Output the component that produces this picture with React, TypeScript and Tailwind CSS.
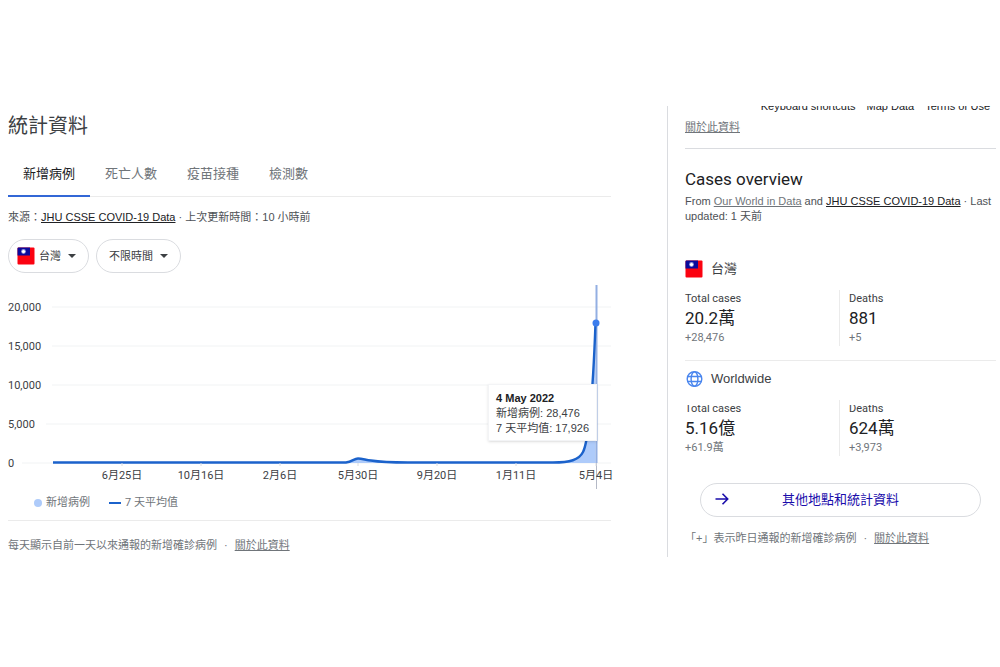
import clsx from "clsx";

const tabs = ["新增病例", "死亡人數", "疫苗接種", "檢測數"];

const yTicks = [
  { label: "20,000", y: 22 },
  { label: "15,000", y: 61 },
  { label: "10,000", y: 100 },
  { label: "5,000", y: 139 },
  { label: "0", y: 178 },
];

const xTicks = [
  { label: "6月25日", x: 114 },
  { label: "10月16日", x: 193 },
  { label: "2月6日", x: 272 },
  { label: "5月30日", x: 350 },
  { label: "9月20日", x: 429 },
  { label: "1月11日", x: 508 },
  { label: "5月4日", x: 588 },
];

const LINE =
  "M45 177.5 H338 C344 177 346 173.5 350 173.5 C354 173.5 358 175 363 175.5 C372 177 385 177.5 400 177.5 H545 C562 177.5 571 175 575 167 C579 159 580 146 582 128 C585 100 586 80 587.5 38";

function Flag() {
  return (
    <svg viewBox="0 0 18 18" className="size-[18px] shrink-0" aria-hidden="true">
      <rect x="0.5" y="0.5" width="17" height="17" rx="1" fill="#fb0210" />
      <path d="M1.5 0.5H13V8.5H0.5V1.5a1 1 0 0 1 1-1z" fill="#0a0a9c" />
      <circle cx="6.5" cy="4.5" r="2.4" fill="#8f96dc" />
      <circle cx="6.5" cy="4.5" r="1.6" fill="#fff" />
    </svg>
  );
}

function Globe() {
  return (
    <svg viewBox="0 0 18 18" className="size-[18px] shrink-0" fill="none" stroke="#4a86ee" strokeWidth="1.4" aria-hidden="true">
      <circle cx="9.5" cy="9" r="7.3" />
      <ellipse cx="9.5" cy="9" rx="3.4" ry="7.3" />
      <path d="M2.8 6.5h13.4M2.8 11.5h13.4" />
    </svg>
  );
}

function Caret() {
  return (
    <svg viewBox="0 0 8 4" className="h-1 w-2 shrink-0" fill="#3c4043" aria-hidden="true">
      <path d="M0 0h8L4 4z" />
    </svg>
  );
}

function Chart() {
  return (
    <div className="relative mt-3">
      <svg viewBox="0 0 603 204" className="block w-full overflow-visible">
        {yTicks.map((t) => (
          <g key={t.label}>
            <path d={`M${t.label.length * 6 + 8} ${t.y}H603`} stroke="#f1f3f4" />
            <text x="0" y={t.y + 4} className="fill-[#3c4043] text-[11px]">
              {t.label}
            </text>
          </g>
        ))}
        <path d={`${LINE} V178 H45 Z`} fill="#aecbfa" />
        <path d="M588.5 0V178" stroke="#93afe2" strokeWidth="2" />
        <path d="M588.5 178V204" stroke="#b4b9c6" />
        <path d={LINE} fill="none" stroke="#1b62cb" strokeWidth="2.4" />
        {xTicks.map((t) => (
          <g key={t.label}>
            <path d={`M${t.x} 178v3`} stroke="#dadce0" />
            <text x={t.x} y="194" textAnchor="middle" className="fill-[#3c4043] text-[11px]">
              {t.label}
            </text>
          </g>
        ))}
        <circle cx="588" cy="38" r="3.5" fill="#3b7ded" />
      </svg>
      <div className="absolute top-[99px] right-3.5 border border-gray-100 bg-white px-[7px] pt-1.5 pb-1 font-[Liberation_Sans,Noto_Sans_CJK_TC,sans-serif] text-[11px] leading-[15px] whitespace-nowrap text-[#3c4043] shadow">
        <p className="font-bold text-[#202124]">4 May 2022</p>
        <p>新增病例: 28,476</p>
        <p>7 天平均值: 17,926</p>
      </div>
    </div>
  );
}

function Stat({ label, value, delta, clipped }: { label: string; value: string; delta: string; clipped?: boolean }) {
  return (
    <div className="border-[#ebebeb] font-[Roboto,Noto_Sans_CJK_TC,sans-serif] not-first:border-l not-first:pl-[9px]">
      <dt className={clsx("text-[11px] leading-[17px] text-[#3c4043]", clipped && "[clip-path:inset(5px_0_0_0)]")}>{label}</dt>
      <dd className="text-[17px] leading-[23px] text-[#202124]">{value}</dd>
      <dd className="text-[11px] leading-4 text-[#70757a]">{delta}</dd>
    </div>
  );
}

export default function App() {
  return (
    <div className="grid min-h-screen grid-cols-[667fr_333fr] items-start bg-white pt-[106px] font-[Liberation_Sans,Noto_Sans_CJK_TC,sans-serif] text-[11px] text-[#4d5156]">
      <main className="pr-14 pl-2">
        <h1 className="text-xl leading-10 text-[#3c4043]">統計資料</h1>
        <nav className="mt-1.5 flex border-b border-[#ebebeb]">
          {tabs.map((tab, i) => (
            <button
              key={tab}
              className={clsx(
                "-mb-px h-[45px] border-b-2 px-[15px] pt-px text-[13px]",
                i === 0 ? "border-[#3367d6] text-[#202124]" : "border-transparent text-[#70757a]"
              )}
            >
              {tab}
            </button>
          ))}
        </nav>
        <p className="mt-2.5 leading-5">
          來源：<a href="#jhu" className="text-[#202124] underline">JHU CSSE COVID-19 Data</a> · 上次更新時間：10 小時前
        </p>
        <div className="mt-3 flex gap-[7px]">
          <button className="flex h-[34px] items-center gap-1 rounded-full border border-[#dadce0] pr-3 pl-2 text-[#3c4043]">
            <Flag />
            <span className="mr-[3px]">台灣</span>
            <Caret />
          </button>
          <button className="flex h-[34px] items-center gap-[7px] rounded-full border border-[#dadce0] px-3 text-[#3c4043]">
            不限時間
            <Caret />
          </button>
        </div>

        <div className="font-[Roboto,Noto_Sans_CJK_TC,sans-serif]">
          <Chart />
          <div className="mt-1.5 flex items-center pl-[26px] leading-4 text-[#70757a]">
            <span className="mr-1 size-2 rounded-full bg-[#aecbfa]" />
            新增病例
            <span className="mr-1 ml-[19px] h-0.5 w-3 bg-[#1b62cb]" />7 天平均值
          </div>
        </div>

        <p className="mt-[9px] border-t border-[#ebebeb] py-4 leading-4 text-[#70757a]">
          每天顯示自前一天以來通報的新增確診病例<span className="mx-[7px]">·</span>
          <a href="#about" className="underline">關於此資料</a>
        </p>
      </main>

      <aside className="border-l border-[#dadce0] pr-1 pb-[11px] pl-[17px]">
        {/* tail of the map's attribution row, cut off by the scroll edge */}
        <div className="flex h-2 items-end justify-end gap-[11px] overflow-hidden pr-1.5 leading-4 whitespace-nowrap text-[#202124]">
          <span>Keyboard shortcuts</span>
          <span>Map Data</span>
          <span>Terms of Use</span>
        </div>
        <p className="mt-[5px] leading-4 text-[#70757a]">
          <a href="#about" className="underline">關於此資料</a>
        </p>

        <h2 className="mt-[13px] border-t border-[#dadce0] pt-[18px] font-[Roboto,Noto_Sans_CJK_TC,sans-serif] text-[17px] leading-6 text-[#202124]">
          Cases overview
        </h2>
        <p className="mt-[3px] leading-[15px]">
          From <a href="#owid" className="text-[#70757a] underline">Our World in Data</a> and{" "}
          <a href="#jhu" className="text-[#202124] underline">JHU CSSE COVID-19 Data</a> · Last updated: 1 天前
        </p>

        <section className="mt-[35px] border-b border-[#ebebeb] pb-3.5">
          <h3 className="flex h-5 items-center gap-2 text-[13px] text-[#3c4043]">
            <Flag />
            台灣
          </h3>
          <dl className="mt-[11px] grid grid-cols-[154fr_157fr]">
            <Stat label="Total cases" value="20.2萬" delta="+28,476" />
            <Stat label="Deaths" value="881" delta="+5" />
          </dl>
        </section>
        <section className="mt-2">
          <h3 className="flex h-5 items-center gap-2 text-[13px] text-[#3c4043]">
            <Globe />
            Worldwide
          </h3>
          <dl className="mt-[11px] grid grid-cols-[154fr_157fr]">
            <Stat label="Total cases" value="5.16億" delta="+61.9萬" clipped />
            <Stat label="Deaths" value="624萬" delta="+3,973" clipped />
          </dl>
        </section>

        <div className="mt-[27px] px-[15px]">
          <button className="relative h-[34px] w-full rounded-full border border-[#dadce0] text-[13px] text-[#1a0dab]">
            <svg viewBox="0 0 14 14" className="absolute top-2 left-3.5 size-3.5" fill="none" stroke="#1a0dab" strokeWidth="1.6" aria-hidden="true">
              <path d="M0.5 7H12.5M7.5 1.8L12.7 7L7.5 12.2" />
            </svg>
            其他地點和統計資料
          </button>
        </div>
        <p className="mt-[13px] leading-4 text-[#70757a]">
          「+」表示昨日通報的新增確診病例<span className="mx-[7px]">·</span>
          <a href="#about" className="underline">關於此資料</a>
        </p>
      </aside>
    </div>
  );
}
